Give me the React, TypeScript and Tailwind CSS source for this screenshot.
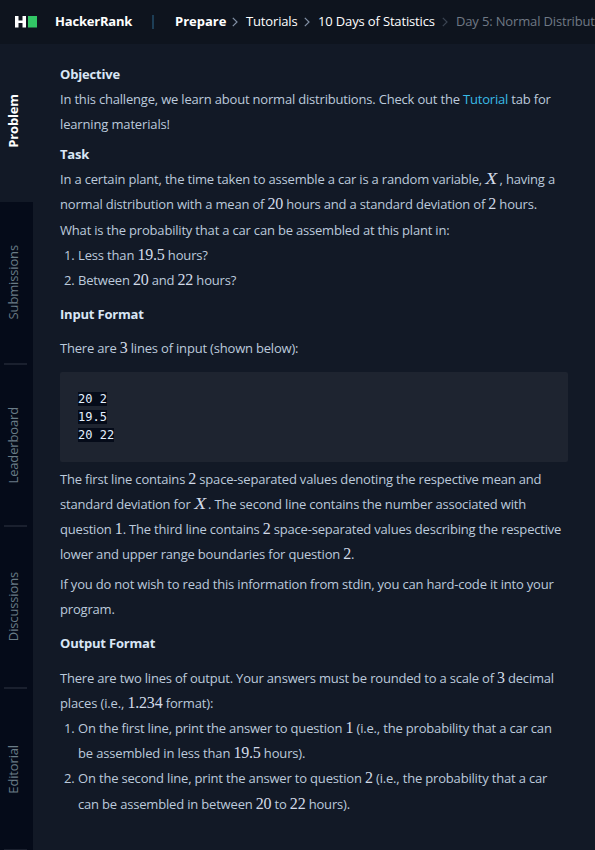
import type { ReactNode } from "react";

function M({ children }: { children: ReactNode }) {
  return <span className="font-['Liberation_Serif',serif] text-[16px] leading-none tracking-[-0.2px] text-[#d3dbe8]">{children}</span>;
}
function X() {
  return <span className="mr-[3px] ml-px inline-block origin-center scale-x-115 font-['Liberation_Serif',serif] text-[17px] leading-none tracking-normal italic text-[#d3dbe8]">X</span>;
}
function L({ children, className = "" }: { children: ReactNode; className?: string }) {
  return <div className={`h-[25px] whitespace-nowrap leading-[25px] ${className}`}>{children}</div>;
}
function H({ children, className = "" }: { children: ReactNode; className?: string }) {
  return <h2 className={`h-[25px] font-bold leading-[25px] text-[#d9e6f5] ${className}`}>{children}</h2>;
}
function Chevron({ className = "" }: { className?: string }) {
  return (
    <svg className={`h-[10px] w-[6px] shrink-0 ${className}`} viewBox="0 0 6 10" fill="none" stroke="currentColor" strokeWidth="1.2">
      <path d="M.8 .8 5 5 .8 9.2" />
    </svg>
  );
}
function Tab({ label, className = "h-[162px]" }: { label: string; className?: string }) {
  return (
    <div className={`flex w-[33px] flex-col items-center ${className}`}>
      <div className="flex flex-1 items-center justify-center pr-[7px]">
        <span className="rotate-180 whitespace-nowrap leading-[18px] tracking-[-0.15px] [writing-mode:vertical-rl]">{label}</span>
      </div>
      <div className="mr-[2px] h-[2px] w-[23px] bg-[#1a202e]" />
    </div>
  );
}

export default function App() {
  return (
    <div className="flex h-[850px] w-[595px] flex-col overflow-hidden bg-[#121926] font-['Open_Sans',sans-serif] text-[13px] text-[#bccadc]">
      <header className="flex h-[44px] shrink-0 items-center whitespace-nowrap bg-[#0e141e] tracking-[-0.15px] text-white">
        <div className="ml-[15px] flex w-[22px] shrink-0 items-center">
          <svg className="h-[12px] w-[22px]" viewBox="0 0 22 12">
            <path d="M0 0h3.5v4.5h4V0H11v11.5H7.5v-4.500h-4v4.500H0z" fill="#fff" />
            <path d="M13 0h9v11.500h-9z" fill="#32c766" />
          </svg>
        </div>
        <span className="ml-[18px] w-[77px] shrink-0 font-bold tracking-[-0.2px]">HackerRank</span>
        <span className="ml-[20px] h-[14px] w-[2px] shrink-0 bg-[#1d3e56]" />
        <span className="ml-[21px] w-[50px] shrink-0 font-bold tracking-normal">Prepare</span>
        <Chevron className="ml-[7px] text-[#8290a5]" />
        <span className="ml-[8px] w-[51px] shrink-0">Tutorials</span>
        <Chevron className="ml-[7px] text-[#8290a5]" />
        <span className="ml-[8px] w-[117px] shrink-0">10 Days of Statistics</span>
        <Chevron className="ml-[7px] text-[#3b4452]" />
        <span className="ml-[8px] shrink-0 text-[#707985]">Day 5: Normal Distribut</span>
      </header>
      <div className="flex min-h-0 flex-1">
        <nav className="w-[33px] shrink-0 bg-[#050b19] text-[#6a7c87]">
          <div className="flex h-[158px] w-[33px] items-center justify-center bg-[#121926] pr-[7px] pb-[5px] font-bold text-white">
            <span className="rotate-180 whitespace-nowrap leading-[18px] tracking-[-0.15px] [writing-mode:vertical-rl]">Problem</span>
          </div>
          <Tab label="Submissions" className="h-[163px]" />
          <Tab label="Leaderboard" />
          <Tab label="Discussions" />
          <Tab label="Editorial" />
        </nav>
        <main className="ml-[27px] w-[508px] pt-[18px] tracking-[-0.19px]">
          <H>Objective</H>
          <L>In this challenge, we learn about normal distributions. Check out the <span className="text-[#39bbe6]">Tutorial</span> tab for</L>
          <L className="tracking-[-0.15px]">learning materials!</L>
          <H className="mt-[5px]">Task</H>
          <L>In a certain plant, the time taken to assemble a car is a random variable, <X />, having a</L>
          <L>normal distribution with a mean of <M>20</M> hours and a standard deviation of <M>2</M> hours.</L>
          <L className="mt-px">What is the probability that a car can be assembled at this plant in:</L>
          <L className="pl-[4px] tracking-[-0.16px]"><span className="inline-block w-[14px]">1.</span>Less than <M>19.5</M> hours?</L>
          <L className="pl-[4px] tracking-[-0.18px]"><span className="inline-block w-[14px]">2.</span>Between <M>20</M> and <M>22</M> hours?</L>
          <H className="mt-[9px]">Input Format</H>
          <L className="mt-[9px]">There are <M>3</M> lines of input (shown below):</L>
          <pre className="mt-[11px] h-[90px] rounded-[2px] bg-[#1e2430] px-[18px] pt-[18px] font-['DejaVu_Sans_Mono',monospace] text-[12px] leading-[18px] tracking-normal text-[#e4f0ff]">
            <code className="bg-[#050b19] font-['DejaVu_Sans_Mono',monospace]">{"20 2\n19.5\n20 22"}</code>
          </pre>
          <L className="mt-[5px]">The first line contains <M>2</M> space-separated values denoting the respective mean and</L>
          <L>standard deviation for <X />. The second line contains the number associated with</L>
          <L>question <M>1</M>. The third line contains <M>2</M> space-separated values describing the respective</L>
          <L className="tracking-[-0.18px]">lower and upper range boundaries for question <M>2</M>.</L>
          <L className="mt-[5px]">If you do not wish to read this information from stdin, you can hard-code it into your</L>
          <L>program.</L>
          <H className="mt-[9px]">Output Format</H>
          <L className="mt-[10px] tracking-[-0.2px]">There are two lines of output. Your answers must be rounded to a scale of <M>3</M> decimal</L>
          <L className="tracking-[-0.15px]">places (i.e., <M>1.234</M> format):</L>
          <L className="pl-[4px] tracking-[-0.18px]"><span className="inline-block w-[14px]">1.</span>On the first line, print the answer to question <M>1</M> (i.e., the probability that a car can</L>
          <L className="pl-[18px] tracking-[-0.16px]">be assembled in less than <M>19.5</M> hours).</L>
          <L className="pl-[4px] tracking-[-0.18px]"><span className="inline-block w-[14px]">2.</span>On the second line, print the answer to question <M>2</M> (i.e., the probability that a car</L>
          <L className="mt-px pl-[18px] tracking-[-0.18px]">can be assembled in between <M>20</M> to <M>22</M> hours).</L>
        </main>
      </div>
    </div>
  );
}
